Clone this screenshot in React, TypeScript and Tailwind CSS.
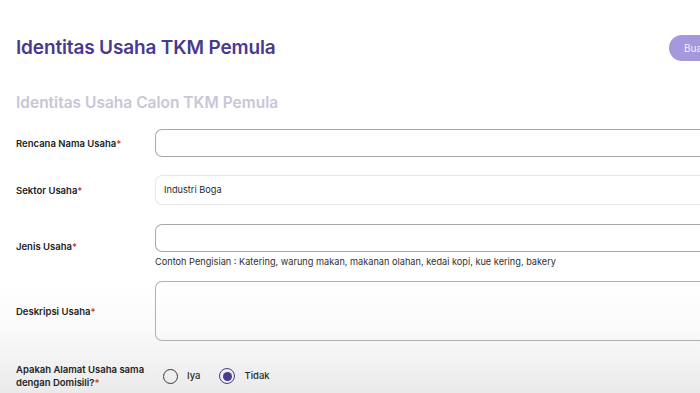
import React from "react";

const Label = ({ children }: { children: React.ReactNode }) => (
  <div className="w-[139px] shrink-0 text-[9.5px] font-semibold leading-[13px] text-[#232323]">
    {children}
    <span className="text-[#c0392b]">*</span>
  </div>
);

export default function App() {
  return (
    <div
      className="w-[700px] h-[393px] overflow-hidden bg-[linear-gradient(to_bottom,#ffffff_0px,#ffffff_280px,#fafafa_330px,#eaeaea_393px)]"
      style={{ fontFamily: "Inter, 'Noto Sans', sans-serif" }}
    >
      <div className="flex items-center justify-between pl-4 pt-[35px] h-[61px]">
        <h1 className="text-[19px] font-semibold leading-[26px] text-[#4a3990] tracking-[-0.15px]">
          Identitas Usaha TKM Pemula
        </h1>
        <div className="h-[26px] w-[31px] rounded-l-full bg-[#a797dc] pl-[15px] text-[10px] leading-[26px] text-[#f4f0ff] overflow-hidden whitespace-nowrap">
          Bua
        </div>
      </div>

      <h2 className="pl-4 mt-[32px] text-[15.5px] font-semibold leading-[20px] text-[#c9c6d7]">
        Identitas Usaha Calon TKM Pemula
      </h2>

      <div className="mt-[16px] pl-4 flex flex-col">
        <div className="flex items-center">
          <Label>Rencana Nama Usaha</Label>
          <div className="h-[28px] flex-1 rounded-l-[7px] border border-r-0 border-[#a9a9a9]" />
        </div>

        <div className="flex items-center mt-[18px]">
          <Label>Sektor Usaha</Label>
          <div className="h-[30px] flex-1 rounded-l-[7px] border border-r-0 border-[#e6e6e6] pl-[8px] text-[9.2px] leading-[28px] text-[#2a2a2a]">
            Industri Boga
          </div>
        </div>

        <div className="flex items-center mt-[19px]">
          <Label>Jenis Usaha</Label>
          <div className="flex-1 flex flex-col">
            <div className="h-[28px] rounded-l-[7px] border border-r-0 border-[#a9a9a9]" />
            <div className="mt-[3px] text-[9.2px] leading-[14px] text-[#2f2f2f] whitespace-nowrap">
              Contoh Pengisian : Katering, warung makan, makanan olahan, kedai kopi, kue kering, bakery
            </div>
          </div>
        </div>

        <div className="flex items-center mt-[12px]">
          <Label>Deskripsi Usaha</Label>
          <div className="h-[60px] flex-1 rounded-l-[7px] border border-r-0 border-[#b0b0b0]" />
        </div>

        <div className="flex items-center mt-[22px]">
          <div className="w-[139px] shrink-0 text-[9.5px] font-semibold leading-[13px] text-[#232323]">
            Apakah Alamat Usaha sama
            <br />
            dengan Domisili?<span className="text-[#c0392b]">*</span>
          </div>
          <div className="flex items-center pl-[8px]">
            <span className="w-[15px] h-[15px] rounded-full border-[1.5px] border-[#3a3a3a]" />
            <span className="ml-[9px] text-[9.5px] font-medium text-[#2a2a2a]">Iya</span>
            <span className="ml-[19px] w-[16px] h-[16px] rounded-full border-[1.5px] border-[#4a3990] flex items-center justify-center">
              <span className="w-[9px] h-[9px] rounded-full bg-[#4a3990]" />
            </span>
            <span className="ml-[9px] text-[9.5px] font-medium text-[#2a2a2a]">Tidak</span>
          </div>
        </div>
      </div>
    </div>
  );
}
